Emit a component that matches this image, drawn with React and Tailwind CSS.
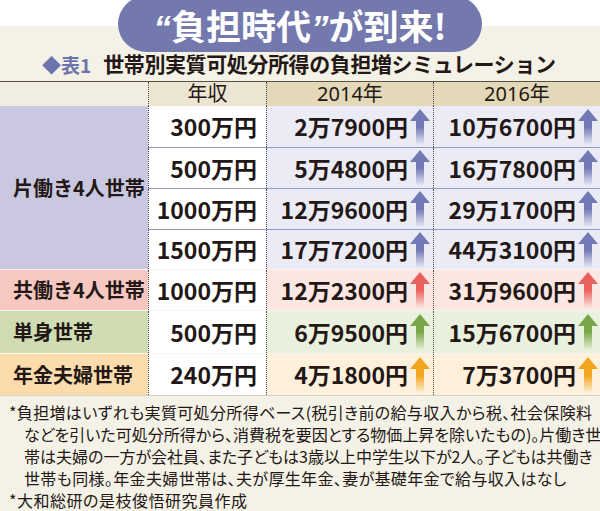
import React from "react";

const JP = { fontFamily: '"Noto Sans CJK JP", "Noto Sans", sans-serif' };
const HEAD = { fontFamily: '"Noto Sans", "Noto Sans CJK JP", sans-serif' };

const ARROW = {
  blue: "#717ab5",
  red: "#e8625b",
  green: "#78a648",
  orange: "#f2a61f",
};

function Arrow({ color }) {
  const c = ARROW[color];
  const id = `grad-${color}`;
  return (
    <svg width="20" height="36" viewBox="0 0 20 36" className="shrink-0">
      <defs>
        <linearGradient id={id} x1="0" y1="0" x2="0" y2="1">
          <stop offset="0" stopColor={c} stopOpacity="1" />
          <stop offset="0.5" stopColor={c} stopOpacity="1" />
          <stop offset="1" stopColor={c} stopOpacity="0" />
        </linearGradient>
      </defs>
      <polygon points="10,0 20,12 14,12 14,36 6,36 6,12 0,12" fill={`url(#${id})`} />
    </svg>
  );
}

const groups = [
  {
    label: "片働き4人世帯",
    labelBg: "bg-[#c9c8e0]",
    dataBg: "bg-[#ebebf5]",
    arrow: "blue",
    rows: [
      ["300万円", "2万7900円", "10万6700円"],
      ["500万円", "5万4800円", "16万7800円"],
      ["1000万円", "12万9600円", "29万1700円"],
      ["1500万円", "17万7200円", "44万3100円"],
    ],
  },
  {
    label: "共働き4人世帯",
    labelBg: "bg-[#f6c8c1]",
    dataBg: "bg-[#fce6e1]",
    arrow: "red",
    rows: [["1000万円", "12万2300円", "31万9600円"]],
  },
  {
    label: "単身世帯",
    labelBg: "bg-[#d0ddb3]",
    dataBg: "bg-[#eaf0de]",
    arrow: "green",
    rows: [["500万円", "6万9500円", "15万6700円"]],
  },
  {
    label: "年金夫婦世帯",
    labelBg: "bg-[#fcdcac]",
    dataBg: "bg-[#fef0db]",
    arrow: "orange",
    rows: [["240万円", "4万1800円", "7万3700円"]],
  },
];

const rowHeights = [
  ["h-[41px]", "h-[41px]", "h-[41px]", "h-[40px]"],
  ["h-[40px]"],
  ["h-[42px]"],
  ["h-[41px]"],
];

export default function App() {
  return (
    <div lang="ja" className="relative w-[600px] h-[511px] overflow-hidden bg-white text-[#231815]" style={JP}>
      {/* title pill */}
      <div className="absolute left-[118px] top-[-4px] w-[364px] h-[56px] rounded-full bg-[#7479ad] flex items-center justify-center pt-[3px] z-10">
        <span className="text-white font-bold text-[35px] leading-none">
          <span style={{ fontFamily: '"Liberation Sans", sans-serif' }} className="italic">“</span>
          負担時代
          <span style={{ fontFamily: '"Liberation Sans", sans-serif' }} className="italic">”</span>
          が到来!
        </span>
      </div>

      <div className="mt-[26px] bg-[#f4f1e6] h-[485px] flex flex-col">
        {/* subtitle */}
        <div className="h-[60px] flex items-end pb-[7px] pl-[42px]">
          <span className="text-[#6c74ad] font-bold text-[19px] leading-none">◆表1</span>
          <span className="ml-[12px] font-bold text-[21px] leading-none tracking-[-0.4px]">世帯別実質可処分所得の負担増シミュレーション</span>
        </div>

        {/* table */}
        <div className="border-t border-[#5c5244]">
          {/* header */}
          <div className="flex h-[24px] text-[20px] leading-none font-normal" style={HEAD}>
            <div className="w-[148px] bg-[#f1ede2]" />
            <div className="w-[118px] bg-[#ece5d2] border-l border-dotted border-[#4a4a4a] flex items-center justify-center">年収</div>
            <div className="w-[167px] bg-[#e3d8b8] border-l border-dotted border-[#4a4a4a] flex items-center justify-center">2014年</div>
            <div className="w-[167px] bg-[#e3d8b8] border-l border-dotted border-[#4a4a4a] flex items-center justify-center">2016年</div>
          </div>

          {groups.map((g, gi) => (
            <div key={gi} className={`flex ${gi > 0 ? "border-t border-[#f7f4ee]" : ""}`}>
              <div className={`w-[148px] ${g.labelBg} flex items-center pl-[13px] font-bold text-[20px] leading-none`}>
                {g.label}
              </div>
              <div className="flex flex-col">
                {g.rows.map((r, ri) => (
                  <div
                    key={ri}
                    className={`flex ${rowHeights[gi][ri]} ${ri > 0 ? "border-t border-[#9499c9]" : ""} font-bold text-[23px] leading-none`}
                  >
                    <div className="w-[118px] bg-white border-l border-dotted border-[#4a4a4a] flex items-center justify-end pr-[9px]">
                      {r[0]}
                    </div>
                    <div className={`w-[167px] ${g.dataBg} border-l border-dotted border-[#4a4a4a] flex items-center justify-end pr-[3px] gap-[2px]`}>
                      <span>{r[1]}</span>
                      <Arrow color={g.arrow} />
                    </div>
                    <div className={`w-[167px] ${g.dataBg} border-l border-dotted border-[#4a4a4a] flex items-center justify-end pr-[2px] gap-[2px]`}>
                      <span>{r[2]}</span>
                      <Arrow color={g.arrow} />
                    </div>
                  </div>
                ))}
              </div>
            </div>
          ))}
          <div className="h-px bg-[#d6d0c4]" />
        </div>

        {/* notes */}
        <div className="pl-[9px] pt-[5px] text-[16px] leading-[22px] whitespace-nowrap [font-feature-settings:'palt']">
          <div className="w-[583px] [text-align-last:justify]">*負担増はいずれも実質可処分所得ベース(税引き前の給与収入から税、社会保険料</div>
          <div className="ml-[15px] w-[568px] [text-align-last:justify]">などを引いた可処分所得から、消費税を要因とする物価上昇を除いたもの)。片働き世</div>
          <div className="ml-[15px] w-[568px] [text-align-last:justify]">帯は夫婦の一方が会社員、また子どもは3歳以上中学生以下が2人。子どもは共働き</div>
          <div className="ml-[15px] tracking-[0.35px]">世帯も同様。年金夫婦世帯は、夫が厚生年金、妻が基礎年金で給与収入はなし</div>
          <div className="tracking-[0.5px]">*大和総研の是枝俊悟研究員作成</div>
        </div>
      </div>
    </div>
  );
}
